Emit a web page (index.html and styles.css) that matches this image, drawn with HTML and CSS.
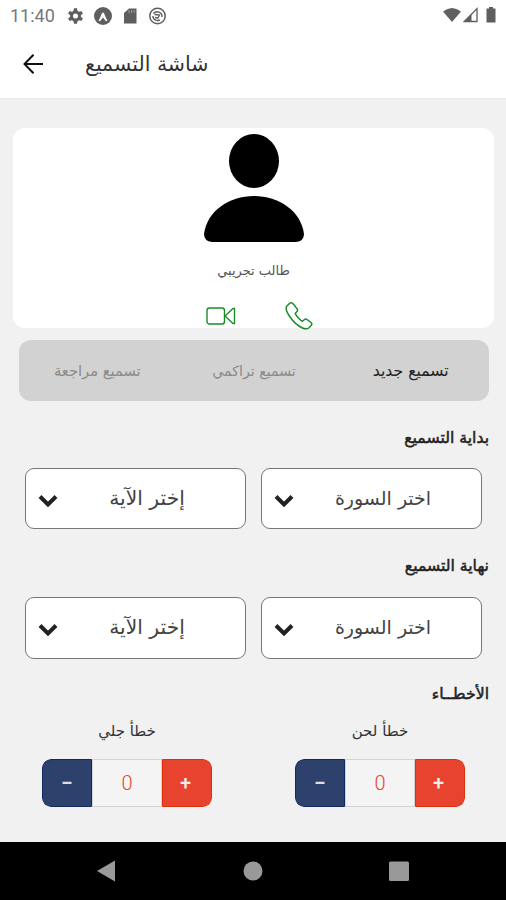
FILE: index.html
```html
<!DOCTYPE html>
<html lang="ar">
<head>
<meta charset="utf-8">
<title>شاشة التسميع</title>
<link rel="stylesheet" href="styles.css">
</head>
<body>
<div class="status">
  <span class="time">11:40</span>
  <svg class="status-left" width="100" height="20" viewBox="0 0 100 20">
    <g fill="#5f5f5f">
      <g transform="translate(7.5 10)"><circle r="4" fill="none" stroke="#5f5f5f" stroke-width="3"/><path d="M-1.5-7.7h3l.6 3h-4.2zM-1.5 7.7h3l.6-3h-4.2zM-7.4-2.5l1.5-2.6 2.8 1-2 3.7zM7.4-2.5l-1.5-2.6-2.8 1 2 3.7zM-7.4 2.500l1.5 2.6 2.8-1-2-3.7zM7.4 2.500l-1.5 2.6-2.8-1 2-3.7z"/></g>
      <circle cx="35" cy="10" r="9"/>
      <path d="M56 7l5-4.500h7.500v15H56z"/>
    </g>
    <path d="M30.500 14.500C33 11 33.500 6.500 35 6.500s2 4.500 4.500 8l-1.500.8-3-3.800-3 3.800z" fill="#fff"/>
    <path d="M61 4v3M63.500 4v3M66 4v3" stroke="#aaa" stroke-width=".8"/>
    <g fill="none" stroke="#5f5f5f" stroke-width="1.500"><circle cx="89.500" cy="10" r="7.700"/><path d="M85.500 7.500a4.800 4.800 0 0 1 8.500 3.500M84.800 10a4.800 4.800 0 0 0 7 4"/><path d="M86.500 8.500l5 .5-1.500 3-3-.500" stroke-width="1.300"/></g>
  </svg>
  <svg class="status-right" width="56" height="20" viewBox="0 0 56 20">
    <path d="M1 5.500Q10-1.500 19 5.500L10 16z" fill="#5f5f5f"/>
    <path d="M22.500 15.500L35 2.500v13z" fill="none" stroke="#5f5f5f" stroke-width="1.300"/><path d="M21 16l8.500-8v8z" fill="#5f5f5f"/>
    <path d="M44.500 2.500h2.500V1h4v1.500h2.500v14h-9z" fill="#5f5f5f"/>
  </svg>
</div>
<header class="header">
  <svg width="20" height="20" viewBox="0 0 20 20" fill="none" stroke="#111" stroke-width="2"><path d="M20 10H1.500M10.500 .8L1.500 10l9 9.200"/></svg>
  <h1 dir="rtl">شاشة التسميع</h1>
</header>
<main>
  <section class="card">
    <svg class="avatar" width="100" height="108" viewBox="0 0 100 108"><ellipse cx="50" cy="27" rx="25" ry="27"/><path d="M8 108Q0 107 0 100C3 77 25 62 50 62s47 15 50 38q0 7-8 8z"/></svg>
    <p class="name" dir="rtl">طالب تجريبي</p>
    <div class="calls">
      <svg width="30" height="20" viewBox="0 0 30 20" fill="none" stroke="#1b8a2b" stroke-width="1.400" stroke-linejoin="round"><rect x="1" y="2" width="17.500" height="16" rx="2.500"/><path d="M19 10l8-7.500h1.500v15H27z"/></svg>
      <svg width="28" height="28" viewBox="0 0 28 28" fill="none" stroke="#1b8a2b" stroke-width="1.500" stroke-linejoin="round"><path d="M4.500 1.500L1.800 4C.5 6 1.500 10 5 15s8 9 12.500 11c3 1.300 5 1 6.500-.3l2.300-2.500c.8-.9.700-1.800-.3-2.700l-4-3c-1-.7-2-.5-2.800.2l-1.700 1.600c-2-.8-6.500-5.500-7.300-7.800L12 9.500c.8-.8.700-1.700.1-2.600L8.300 2C7.200.6 5.700.5 4.500 1.500z"/></svg>
    </div>
  </section>
  <nav class="tabs" dir="rtl">
    <span class="tab tab-on">تسميع جديد</span>
    <span class="tab tab-mid">تسميع تراكمي</span>
    <span class="tab">تسميع مراجعة</span>
  </nav>
  <h2 dir="rtl">بداية التسميع</h2>
  <div class="selects" dir="rtl">
    <div class="select"><span>اختر السورة</span><svg width="20" height="14" viewBox="0 0 20 14"><path d="M2 2.500l8 8 8-8" fill="none" stroke="#222" stroke-width="4"/></svg></div>
    <div class="select ayah"><span>إختر الآية</span><svg width="20" height="14" viewBox="0 0 20 14"><path d="M2 2.500l8 8 8-8" fill="none" stroke="#222" stroke-width="4"/></svg></div>
  </div>
  <h2 dir="rtl">نهاية التسميع</h2>
  <div class="selects selects-end" dir="rtl">
    <div class="select"><span>اختر السورة</span><svg width="20" height="14" viewBox="0 0 20 14"><path d="M2 2.500l8 8 8-8" fill="none" stroke="#222" stroke-width="4"/></svg></div>
    <div class="select ayah"><span>إختر الآية</span><svg width="20" height="14" viewBox="0 0 20 14"><path d="M2 2.500l8 8 8-8" fill="none" stroke="#222" stroke-width="4"/></svg></div>
  </div>
  <h2 class="errors-title" dir="rtl">الأخطــاء</h2>
  <div class="errors">
    <div class="error">
      <p dir="rtl">خطأ جلي</p>
      <div class="counter"><span class="minus">−</span><span class="value">0</span><span class="plus">+</span></div>
    </div>
    <div class="error">
      <p dir="rtl">خطأ لحن</p>
      <div class="counter"><span class="minus">−</span><span class="value">0</span><span class="plus">+</span></div>
    </div>
  </div>
</main>
<footer class="system">
  <svg width="20" height="22" viewBox="0 0 20 22"><path d="M1 11L19 .5v21z" fill="#999"/></svg>
  <svg width="20" height="22" viewBox="0 0 20 22"><circle cx="10" cy="11" r="9.500" fill="#999"/></svg>
  <svg width="20" height="22" viewBox="0 0 20 22"><rect y="1.500" width="20" height="19.500" rx="1.500" fill="#999"/></svg>
</footer>
</body>
</html>
```
FILE: styles.css
```css
* { box-sizing: border-box; }
body { margin: 0; width: 506px; height: 900px; overflow: hidden; background: #f1f1f1; font-family: "DejaVu Sans", sans-serif; display: flex; flex-direction: column; }
h1, h2, p { margin: 0; font-weight: normal; white-space: nowrap; }
svg { display: block; flex: none; }
.status { height: 32px; background: #fff; display: flex; align-items: center; padding: 0 8px 0 10px; }
.time { width: 58px; font: 18px/32px Roboto, sans-serif; color: #777; }
.status-right { margin-left: auto; }
.header { height: 67px; background: #fff; border-bottom: 1px solid #e8e8e8; display: flex; align-items: center; padding: 0 0 2px 23px; gap: 42px; }
h1 { font-size: 20.5px; color: #333; line-height: 36px; }
main { height: 743px; padding: 29px 11px 0 12px; }
.card { height: 200px; margin: 0 1px; background: #fff; border-radius: 12px; display: flex; flex-direction: column; align-items: center; padding-top: 6px; }
.name { height: 20px; margin-top: 19px; font-size: 13px; line-height: 20px; color: #555; }
.calls { display: flex; align-items: center; gap: 49px; margin-top: 21px; padding-left: 12px; }
.tabs { height: 61px; margin: 12px 6px 0 7px; background: #d2d2d2; border-radius: 12px; display: grid; grid-template-columns: repeat(3, 1fr); align-items: center; text-align: center; font-size: 14.7px; color: #8a8a8a; }
.tab { white-space: nowrap; }
.tab-on { color: #222; font-size: 15.7px; }
.tab-mid { font-size: 14.2px; }
h2 { height: 30px; margin: 22px 6px 0; line-height: 30px; font-size: 15.7px; color: #222; -webkit-text-stroke: .5px #222; }
.selects { display: grid; grid-template-columns: 221px 221px; gap: 15px; margin: 15px 13px 0; height: 61px; }
.selects-end { margin-top: 16px; height: 62px; }
.select { border: 1px solid #777; border-radius: 9px; background: #fff; display: flex; align-items: center; padding: 0 0 2px 12px; font-size: 19px; color: #444; }
.select span { flex: 1; text-align: center; padding-right: 9px; white-space: nowrap; }
.ayah { font-size: 20.3px; }
.select svg { margin-top: 6px; }
.errors-title { margin-top: 20px; }
.errors { display: flex; gap: 83px; padding-left: 30px; margin-top: 7px; }
.error { width: 170px; text-align: center; }
.error p { height: 30px; line-height: 30px; font-size: 15px; color: #333; }
.counter { height: 48px; margin-top: 13px; display: grid; grid-template-columns: 50px 70px 50px; border-radius: 9px; overflow: hidden; font-family: Roboto, sans-serif; line-height: 46px; }
.counter span { border: 1px solid #d4d4d4; }
.counter .minus { background: #2e416c; color: #ddd; border-color: #102a60; font-size: 21px; font-weight: 700; border-radius: 9px 0 0 9px; }
.counter .value { color: #e8432e; background: #f4f4f4; font-size: 20px; font-weight: 300; }
.counter .plus { background: #e8432e; color: #eee; border-color: #e0300b; font-size: 20px; font-weight: 500; padding-right: 3px; border-radius: 0 9px 9px 0; }
.system { height: 58px; background: #000; display: flex; justify-content: space-between; align-items: center; padding: 0 97px 0 96px; }
```
